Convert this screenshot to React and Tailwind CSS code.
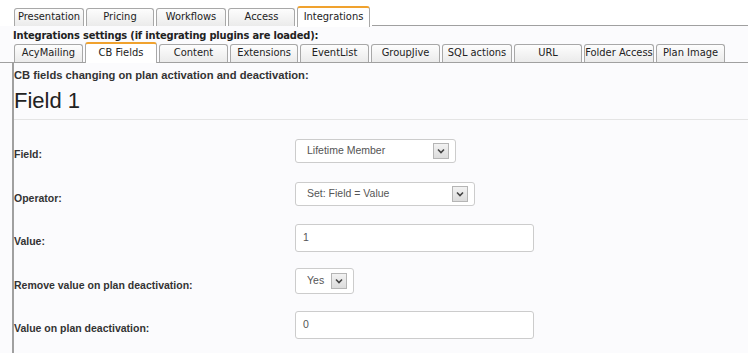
import React from 'react';

const topTabs = [
  { label: 'Presentation', w: 'w-[70px]' },
  { label: 'Pricing', w: 'w-[68px]' },
  { label: 'Workflows', w: 'w-[70px]' },
  { label: 'Access', w: 'w-[67px]' },
  { label: 'Integrations', w: 'w-[73px]', active: true },
];

const subTabs = [
  { label: 'AcyMailing', w: 'w-[69px]' },
  { label: 'CB Fields', w: 'w-[72px]', active: true },
  { label: 'Content', w: 'w-[69px]' },
  { label: 'Extensions', w: 'w-[68px]' },
  { label: 'EventList', w: 'w-[69px]' },
  { label: 'GroupJive', w: 'w-[69px]' },
  { label: 'SQL actions', w: 'w-[70px]' },
  { label: 'URL', w: 'w-[68px]' },
  { label: 'Folder Access', w: 'w-[70px]' },
  { label: 'Plan Image', w: 'w-[69px]' },
];

const tabFont = { fontFamily: '"DejaVu Sans Condensed", "DejaVu Sans", sans-serif' };

function Tab({ label, w, active }) {
  if (active) {
    return (
      <div
        className={`${w} h-[21px] -mb-px flex items-center justify-center rounded-t-[3px] border border-b-0 border-[#a8a8a8] border-t-2 border-t-[#f0a22e] bg-white text-[11px] text-[#222] whitespace-nowrap`}
        style={tabFont}
      >
        {label}
      </div>
    );
  }
  return (
    <div
      className={`${w} h-[18px] flex items-center justify-center rounded-t-[3px] border border-b-0 border-[#a8a8a8] bg-gradient-to-b from-[#fdfdfd] to-[#ebebeb] text-[11px] text-[#222] whitespace-nowrap`}
      style={tabFont}
    >
      {label}
    </div>
  );
}

function Arrow() {
  return (
    <span className="w-[16px] h-[16px] flex items-center justify-center border border-[#b5b5b5] bg-gradient-to-b from-[#f2f2f2] to-[#dcdcdc]">
      <svg width="8" height="6" viewBox="0 0 8 6">
        <path d="M1 1.5 L4 4.5 L7 1.5" fill="none" stroke="#444" strokeWidth="1.6" />
      </svg>
    </span>
  );
}

function Select({ value, w, h = 'h-[24px]' }) {
  return (
    <div className={`${w} ${h} flex items-center justify-between pl-[11px] pr-[6px] bg-white border border-[#cccccc] rounded-[3px] text-[10.5px] text-[#555]`}>
      <span>{value}</span>
      <Arrow />
    </div>
  );
}

function Input({ value }) {
  return (
    <div className="w-[239px] h-[28px] flex items-center pl-[7px] bg-white border border-[#cccccc] rounded-[3px] text-[10.5px] text-[#555]">
      {value}
    </div>
  );
}

function Row({ label, children }) {
  return (
    <div className="h-[43.5px] flex items-center">
      <div className="w-[281px] pt-[9px] font-bold text-[10.5px] text-[#333]">{label}</div>
      {children}
    </div>
  );
}

export default function App() {
  return (
    <div className="w-[748px] h-[353px] overflow-hidden bg-white" style={{ fontFamily: '"Liberation Sans", Arial, sans-serif' }}>
      {/* main tabs */}
      <div className="flex items-end gap-[2px] pl-[14px] pt-[6px]">
        {topTabs.map((t) => (
          <Tab key={t.label} {...t} />
        ))}
        <div className="flex-1 border-b border-[#a0a0a0]" />
      </div>

      <div className="bg-[#fbfbfd]">
        <div className="pl-[13px] pt-[2px] h-[17px] font-bold text-[11px] tracking-[-0.17px] text-[#222]" style={tabFont}>
          Integrations settings (if integrating plugins are loaded):
        </div>

        {/* sub tabs */}
        <div className="flex items-end gap-[2px] pl-[14px] border-b border-[#a0a0a0] h-[20px]">
          {subTabs.map((t) => (
            <Tab key={t.label} {...t} />
          ))}
        </div>

        {/* panel */}
        <div className="ml-[12px] border-l-2 border-[#a0a0a0] h-[290px]">
          <div className="pt-[4px] font-bold text-[11.2px] text-[#333]">
            CB fields changing on plan activation and deactivation:
          </div>
          <div className="pt-[2px] text-[22px] leading-[30px] text-[#222]">Field 1</div>
          <div className="mt-[3px] border-b border-[#e4e4e4]" />

          <div className="pt-[9px]">
            <Row label="Field:">
              <Select value="Lifetime Member" w="w-[161px]" />
            </Row>
            <Row label="Operator:">
              <Select value="Set: Field = Value" w="w-[180px]" />
            </Row>
            <Row label="Value:">
              <Input value="1" />
            </Row>
            <Row label="Remove value on plan deactivation:">
              <Select value="Yes" w="w-[59px]" h="h-[26px]" />
            </Row>
            <Row label="Value on plan deactivation:">
              <Input value="0" />
            </Row>
          </div>
        </div>
      </div>
    </div>
  );
}
